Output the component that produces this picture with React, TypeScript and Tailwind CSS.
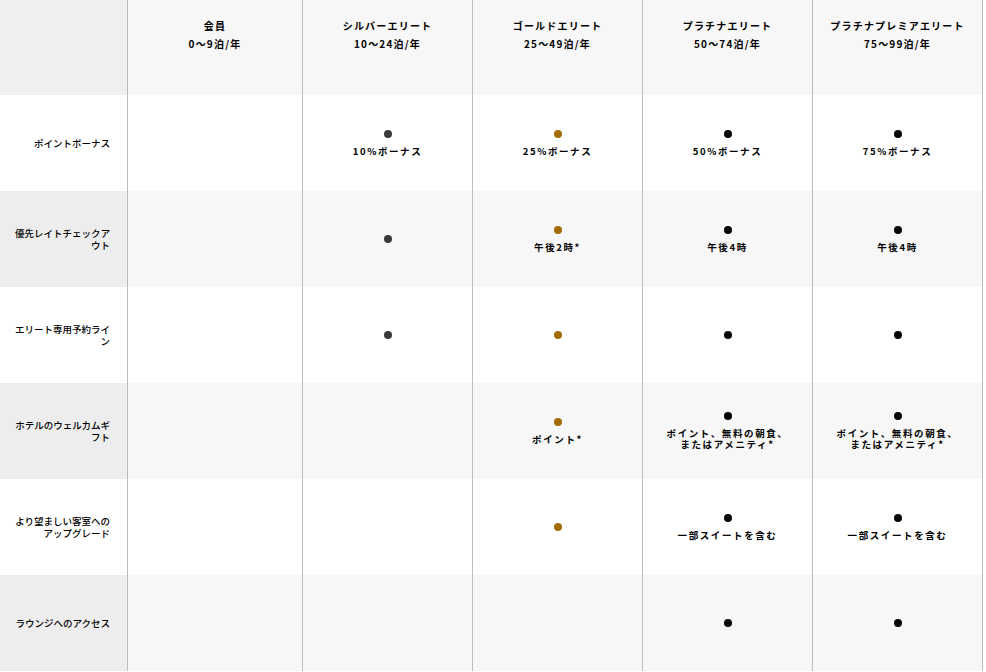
import React from "react";

type Dot = "s" | "g" | "p" | null;
type Cell = { dot: Dot; text?: string[] };

const tiers = [
  ["会員", "0〜9泊/年"],
  ["シルバーエリート", "10〜24泊/年"],
  ["ゴールドエリート", "25〜49泊/年"],
  ["プラチナエリート", "50〜74泊/年"],
  ["プラチナプレミアエリート", "75〜99泊/年"],
];

const rows: { label: string; cells: Cell[] }[] = [
  {
    label: "ポイントボーナス",
    cells: [
      { dot: null },
      { dot: "s", text: ["10%ボーナス"] },
      { dot: "g", text: ["25%ボーナス"] },
      { dot: "p", text: ["50%ボーナス"] },
      { dot: "p", text: ["75%ボーナス"] },
    ],
  },
  {
    label: "優先レイトチェックアウト",
    cells: [
      { dot: null },
      { dot: "s" },
      { dot: "g", text: ["午後2時*"] },
      { dot: "p", text: ["午後4時"] },
      { dot: "p", text: ["午後4時"] },
    ],
  },
  {
    label: "エリート専用予約ライン",
    cells: [{ dot: null }, { dot: "s" }, { dot: "g" }, { dot: "p" }, { dot: "p" }],
  },
  {
    label: "ホテルのウェルカムギフト",
    cells: [
      { dot: null },
      { dot: null },
      { dot: "g", text: ["ポイント*"] },
      { dot: "p", text: ["ポイント、無料の朝食、", "またはアメニティ*"] },
      { dot: "p", text: ["ポイント、無料の朝食、", "またはアメニティ*"] },
    ],
  },
  {
    label: "より望ましい客室へのアップグレード",
    cells: [
      { dot: null },
      { dot: null },
      { dot: "g" },
      { dot: "p", text: ["一部スイートを含む"] },
      { dot: "p", text: ["一部スイートを含む"] },
    ],
  },
  {
    label: "ラウンジへのアクセス",
    cells: [{ dot: null }, { dot: null }, { dot: null }, { dot: "p" }, { dot: "p" }],
  },
];

const dotClass: Record<string, string> = {
  s: "bg-[#3a3a3a]",
  g: "bg-[#a36c00]",
  p: "bg-[#050505]",
};

const font = {
  fontFamily: '"Noto Sans CJK JP", "Noto Sans", sans-serif',
};

export default function App() {
  return (
    <div className="w-[986px] h-[672px] bg-white overflow-hidden text-black" style={font}>
      <div className="grid grid-cols-[127px_175px_170px_170px_170px_171px] grid-rows-[95px_repeat(6,96px)]">
        <div className="bg-[#efefef]" />
        {tiers.map((t, i) => (
          <div
            key={i}
            className={`bg-[#f7f7f7] border-l border-[#bdbdbd] pt-[17px] flex flex-col items-center text-[10px] font-bold leading-[18px] tracking-[1.2px] ${
              i === 4 ? "border-r" : ""
            }`}
          >
            <div>{t[0]}</div>
            <div>{t[1]}</div>
          </div>
        ))}
        {rows.map((r, ri) => {
          const gray = ri % 2 === 1;
          return (
            <React.Fragment key={ri}>
              <div
                className={`flex items-center justify-end pl-[14px] pr-[17px] ${
                  gray ? "bg-[#ededed]" : "bg-white"
                }`}
              >
                <div className="text-right text-[9.5px] leading-[12px] font-medium">{r.label}</div>
              </div>
              {r.cells.map((c, ci) => (
                <div
                  key={ci}
                  className={`border-l border-[#bdbdbd] flex flex-col items-center justify-center gap-[8px] ${
                    gray ? "bg-[#f7f7f7]" : "bg-white"
                  } ${ci === 4 ? "border-r" : ""}`}
                >
                  {c.dot && <div className={`w-[8px] h-[8px] rounded-full ${dotClass[c.dot]}`} />}
                  {c.text && (
                    <p className="text-center text-[9.5px] leading-[11px] font-bold tracking-[1.6px]">
                      {c.text.map((l, li) => (
                        <React.Fragment key={li}>
                          {li > 0 && <br />}
                          {l}
                        </React.Fragment>
                      ))}
                    </p>
                  )}
                </div>
              ))}
            </React.Fragment>
          );
        })}
      </div>
    </div>
  );
}
